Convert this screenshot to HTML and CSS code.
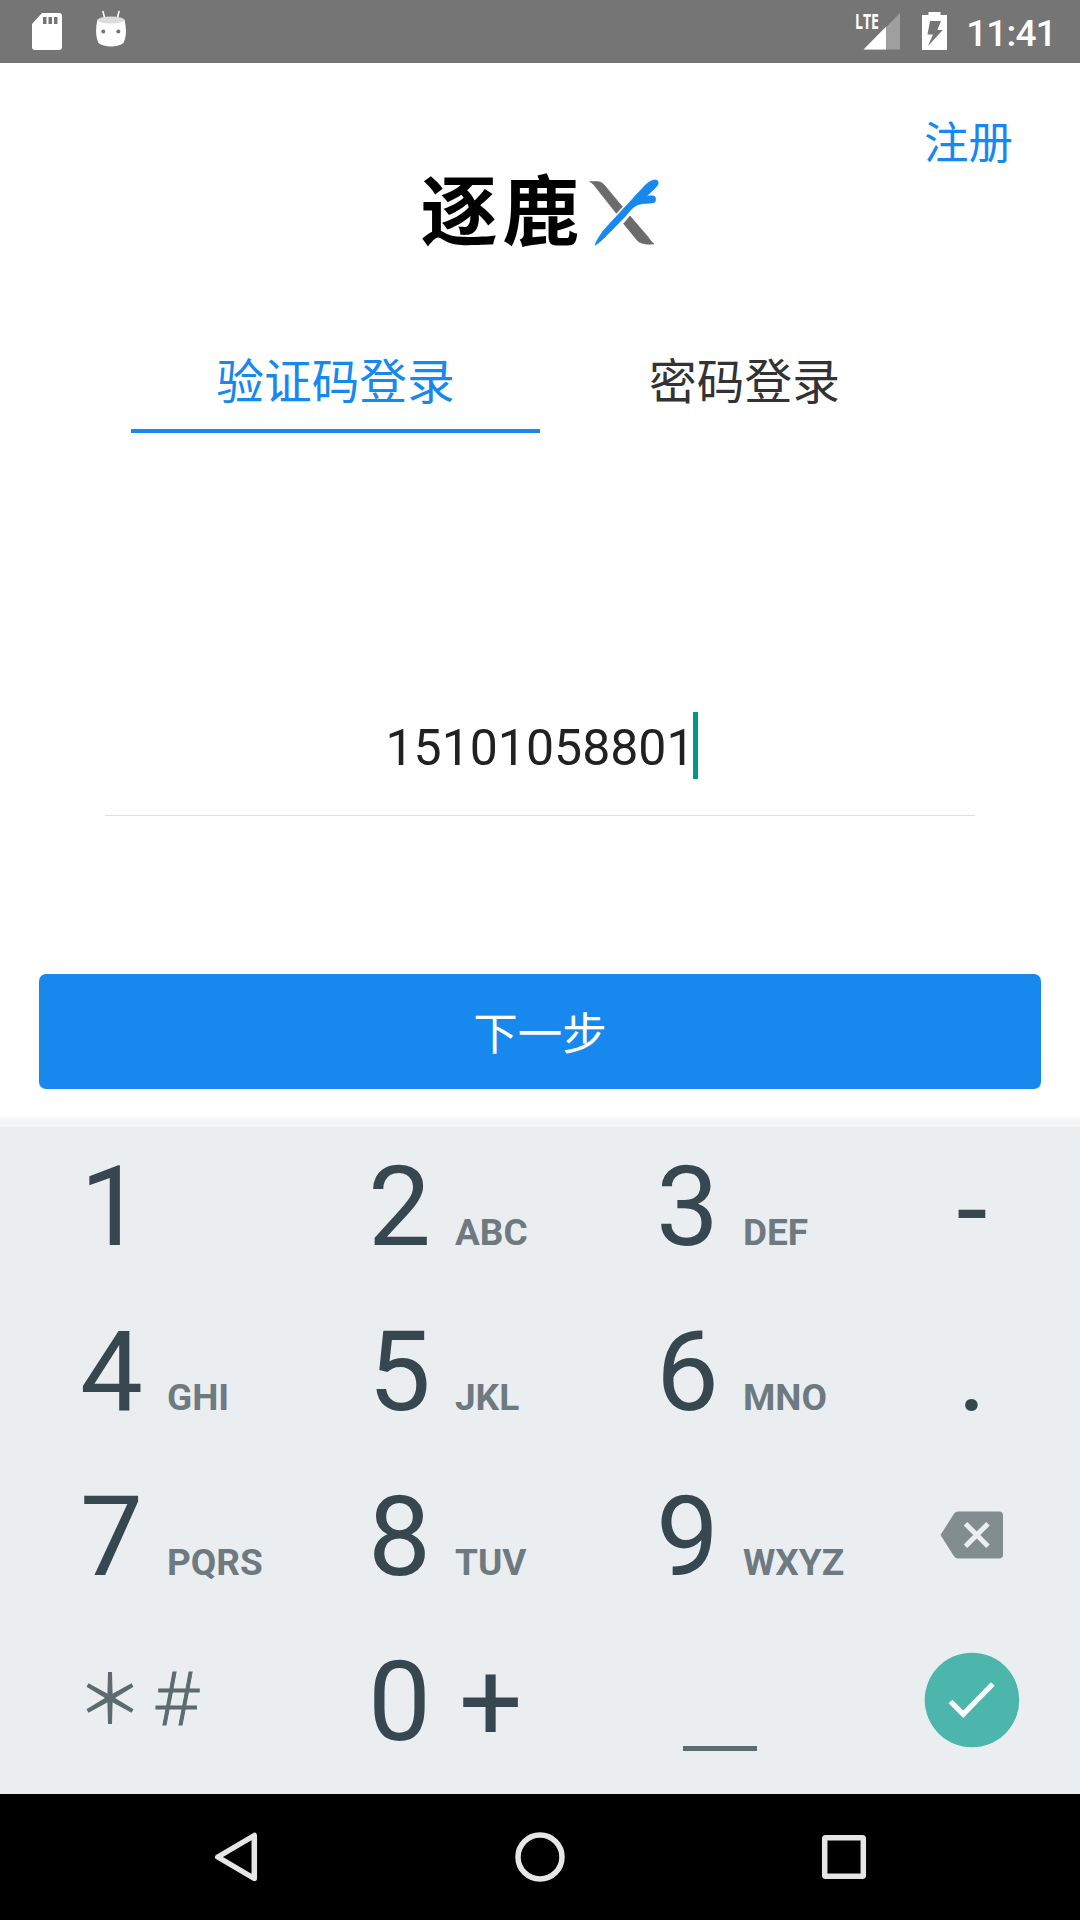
FILE: index.html
```html
<!DOCTYPE html>
<html lang="zh-CN">
<head>
<meta charset="utf-8">
<title>登录</title>
<link rel="stylesheet" href="styles.css">
</head>
<body>
<div class="screen">
  <header class="status-bar">
    <div class="status-icons">
      <svg width="32" height="40" viewBox="0 0 32 40" fill="#fff"><path fill-rule="evenodd" d="M11 1h17a3 3 0 0 1 3 3v31a3 3 0 0 1-3 3H4a3 3 0 0 1-3-3V12zM12 5v7h3.500V5zM17.500 5v7h3.500V5zM23 5v7h3.500V5z"/></svg>
      <svg width="32" height="40" viewBox="0 0 32 40"><path d="M8 1.500l2 8M24 1.500l-2 8" stroke="#fff" stroke-width="1.600" stroke-linecap="round"/><path d="M2.500 9.500C.500 18 .500 27 3.500 33c5 4.600 20 4.600 25 0 3-6 3-15 1-23.500z" fill="#fff"/><ellipse cx="16" cy="10" rx="13.300" ry="3.500" fill="#dcdcdc"/><circle cx="8.300" cy="21.500" r="2" fill="#757575"/><circle cx="23.300" cy="21.500" r="2" fill="#757575"/></svg>
    </div>
    <div class="status-right">
      <svg class="signal" width="54" height="50" viewBox="-8 -12 54 50"><path d="M10 37.500L46 1v36.500z" fill="#9f9f9f"/><path d="M9.500 37.500L32 14.700v22.800z" fill="#fff"/><text class="network" x="1" y="17" textLength="24" lengthAdjust="spacingAndGlyphs">LTE</text></svg>
      <svg width="25" height="38" viewBox="0 0 25 38"><path fill="#fff" fill-rule="evenodd" d="M6.500 0h12v3H25v35H0V3h6.500zM8 9L5.500 22.500H11L6 34l14.800-16h-5.500L19 9z"/></svg>
      <span class="clock">11:41</span>
    </div>
  </header>

  <main class="login">
    <a class="register">注册</a>
    <div class="brand">
      <span class="brand-name">逐鹿</span>
      <svg class="brand-mark" width="74" height="69" viewBox="558 84 222 207"><path d="M569 95c22-1 34-1 42 8l56 67-18 20-60-76c-6-8-12-16-20-19z" fill="#6b6b6b" stroke="#6b6b6b" stroke-width="2"/><path d="M690 198l55 64c5 8 10 15 17 20-30 2-44-3-52-13l-39-48z" fill="#6b6b6b" stroke="#6b6b6b" stroke-width="2"/><path d="M585 284c8-18 19-36 34-52L737 104c12-10 24-17 34-13 6 5 4 14-2 19l-29 29c8-2 18-2 23 0 6 5 5 15-1 19-20 3-38 0-54 9-13 7-21 19-31 31l-58 59c-11 11-20 20-32 28z" fill="#1789ee" stroke="#1789ee" stroke-width="2"/></svg>
    </div>
    <nav class="tabs">
      <a class="tab tab-active">验证码登录</a>
      <a class="tab">密码登录</a>
    </nav>
    <div class="phone-field"><span class="phone">15101058801</span><span class="caret"></span></div>
    <button class="next">下一步</button>
  </main>

  <section class="keypad">
    <div class="key"><span class="digit">1</span></div>
    <div class="key"><span class="digit">2</span><span class="letters">ABC</span></div>
    <div class="key"><span class="digit">3</span><span class="letters">DEF</span></div>
    <div class="key key-side key-minus"><span class="digit">-</span></div>

    <div class="key"><span class="digit">4</span><span class="letters">GHI</span></div>
    <div class="key"><span class="digit">5</span><span class="letters">JKL</span></div>
    <div class="key"><span class="digit">6</span><span class="letters">MNO</span></div>
    <div class="key key-side"><span class="digit">.</span></div>

    <div class="key"><span class="digit">7</span><span class="letters">PQRS</span></div>
    <div class="key"><span class="digit">8</span><span class="letters">TUV</span></div>
    <div class="key"><span class="digit">9</span><span class="letters">WXYZ</span></div>
    <div class="key key-side key-icon"><svg width="64" height="48" viewBox="0 0 64 48"><path d="M18 .500h41a4 4 0 0 1 4 4v39a4 4 0 0 1-4 4H18q-2.500 0-4-2.200L.500 24 14 2.700Q15.500.500 18 .500z" fill="#838d90"/><path d="M25.500 12.700l22.500 22.500M48 12.700L25.500 35.200" stroke="#ebeef1" stroke-width="5"/></svg></div>

    <div class="key key-symbols">
      <svg width="48" height="52" viewBox="0 0 48 52" fill="#5c6b70"><path d="M22 0h4l.700 26L26 52h-4l-.700-26z"/><path d="M22 0h4l.700 26L26 52h-4l-.700-26z" transform="rotate(60 24 26)"/><path d="M22 0h4l.700 26L26 52h-4l-.700-26z" transform="rotate(-60 24 26)"/></svg>
      <span class="hash">#</span>
    </div>
    <div class="key"><span class="digit">0</span><span class="digit plus">+</span></div>
    <div class="key key-space"><span class="space-mark"></span></div>
    <div class="key key-side key-icon"><svg class="done" width="96" height="96" viewBox="0 0 96 96"><circle cx="48" cy="48" r="47.300" fill="#4db6ac"/><path d="M26.500 49.500L39.200 62.200 68.800 32" fill="none" stroke="#fff" stroke-width="5.200"/></svg></div>
  </section>

  <footer class="nav-bar">
    <svg width="60" height="60" viewBox="0 0 60 60"><path d="M48.300 8.500v43L11.800 30z"/></svg>
    <svg width="60" height="60" viewBox="0 0 60 60"><circle cx="30" cy="30" r="22"/></svg>
    <svg width="60" height="60" viewBox="0 0 60 60"><rect x="10.700" y="10.700" width="38.600" height="38.600" rx="1"/></svg>
  </footer>
</div>
</body>
</html>
```
FILE: styles.css
```css
* { box-sizing: border-box; }

body {
  margin: 0;
  background: #fff;
  font-family: Roboto, "Noto Sans CJK SC", sans-serif;
}

svg { display: block; flex: none; }

.screen {
  width: 1080px;
  height: 1920px;
  display: flex;
  flex-direction: column;
  overflow: hidden;
}

.status-bar {
  height: 63px;
  flex: none;
  background: #757575;
  display: flex;
  justify-content: space-between;
  padding: 0 24px 0 31px;
  color: #fff;
}

.status-icons {
  display: flex;
  gap: 32px;
  padding-top: 12px;
}

.status-icons svg + svg { margin-top: -2px; }

.status-right {
  display: flex;
  align-items: flex-start;
  gap: 22px;
  padding-top: 12px;
}

.signal { margin-top: -12px; }

.network {
  font: 700 22px "Open Sans", sans-serif;
  fill: #fff;
}

.clock {
  font-size: 37px;
  font-weight: 500;
  line-height: 43px;
  letter-spacing: -0.8px;
  margin-left: -3px;
}

.login {
  height: 1061px;
  flex: none;
  display: flex;
  flex-direction: column;
  background: linear-gradient(#fff 1052px, #f0f0f0 1061px);
}

.register {
  align-self: flex-end;
  margin: 49px 67px 0 0;
  font-size: 44.5px;
  line-height: 64px;
  color: #1789ee;
}

.brand {
  height: 84px;
  margin-top: -11px;
  display: flex;
  justify-content: center;
  align-items: flex-start;
}

.brand-name {
  width: 166px;
  font-family: "Noto Sans CJK TC", sans-serif;
  font-weight: 700;
  font-size: 77px;
  line-height: 84px;
  letter-spacing: 5px;
  color: #000;
}

.brand-mark {
  margin-top: 13px;
  margin-left: -1px;
}

.tabs {
  display: flex;
  margin: 97px 131px 0;
  height: 87px;
}

.tab {
  width: 409px;
  border-bottom: 4px solid transparent;
  text-align: center;
  font-size: 47.7px;
  line-height: 74px;
  color: #333;
}

.tab-active {
  color: #1789ee;
  border-color: #1789ee;
}

.phone-field {
  height: 104px;
  margin: 279px 105px 0;
  border-bottom: 1px solid #e0e0e0;
  display: flex;
  justify-content: center;
}

.phone {
  font-size: 50px;
  line-height: 73px;
  color: #212121;
}

.caret {
  width: 5px;
  height: 67px;
  margin: 0 -3px 0 -2px;
  background: #009688;
}

.next {
  height: 115px;
  margin: 158px 39px 0;
  padding: 6px 0 0;
  border: 0;
  border-radius: 7px;
  background: #1789ee;
  color: #fff;
  font: 44.5px/108px Roboto, "Noto Sans CJK SC", sans-serif;
}

.keypad {
  height: 670px;
  flex: none;
  display: grid;
  grid-template-columns: 288px 288px 288px 216px;
  grid-template-rows: repeat(4, 165px);
  background: linear-gradient(#f5f5f5 3px, #ebeef1 3px);
}

.key {
  display: flex;
  align-items: baseline;
  padding-left: 80px;
  color: #37474f;
}

.key-side {
  justify-content: center;
  padding-left: 0;
}

.key-minus { padding-top: 3px; }

.key-icon {
  align-items: flex-start;
  padding-top: 57px;
}

.done { margin-top: -24px; }

.digit {
  font-size: 112px;
  line-height: 165px;
}

.plus { margin-left: 28px; }

.letters {
  margin-left: 24px;
  font-size: 37px;
  font-weight: 700;
  color: #6e7a80;
}

.key-symbols {
  align-items: flex-start;
  padding: 53px 0 0 86px;
}

.hash {
  margin-left: 20px;
  font: 300 73px/86px "Open Sans", sans-serif;
  -webkit-text-stroke: 1px #5c6b70;
  margin-top: -18px;
  color: #5c6b70;
}

.key-space {
  align-items: flex-start;
  padding: 127px 0 0 107px;
}

.space-mark {
  width: 74px;
  height: 5px;
  background: #5c6b70;
}

.nav-bar {
  flex: 1;
  background: #000;
  display: flex;
  justify-content: space-between;
  align-items: center;
  padding: 0 206px;
}

.nav-bar svg {
  fill: none;
  stroke: #e6e6e6;
  stroke-width: 5.5;
  stroke-linejoin: round;
}
```
